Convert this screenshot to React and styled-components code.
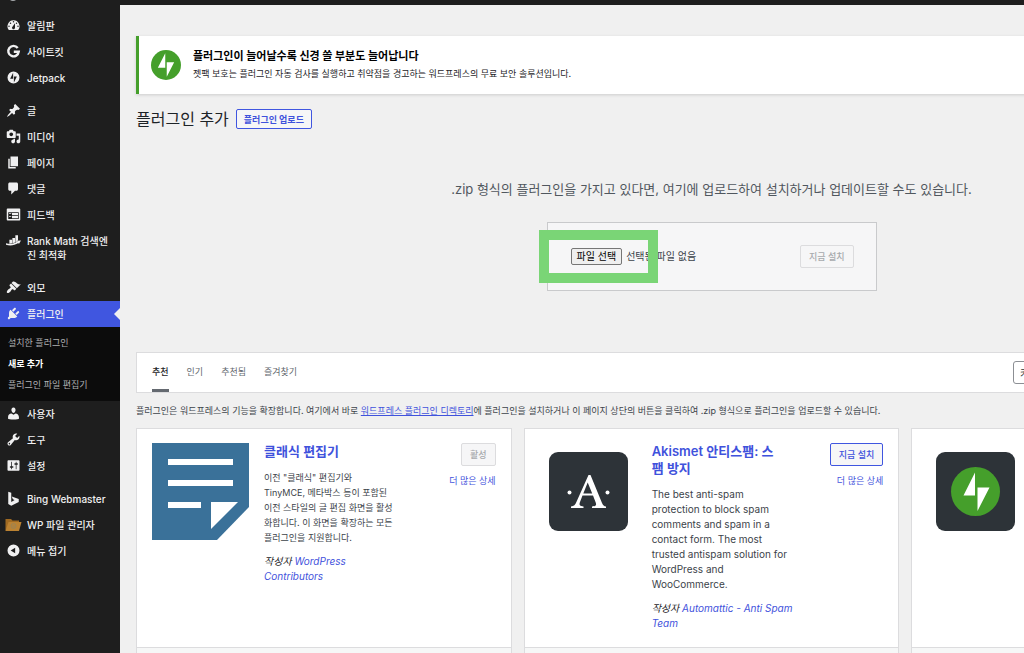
import React, { useState } from "react";
import styled, { createGlobalStyle, css } from "styled-components";

const menu = [
	[
		{ icon: "dashboard", label: "알림판" },
		{ icon: "google", label: "사이트킷" },
		{ icon: "jetpack", label: "Jetpack" },
	],
	[
		{ icon: "pin", label: "글" },
		{ icon: "media", label: "미디어" },
		{ icon: "page", label: "페이지" },
		{ icon: "comments", label: "댓글" },
		{ icon: "feedback", label: "피드백" },
		{ icon: "rank", label: "Rank Math 검색엔\n진 최적화" },
	],
	[
		{ icon: "appearance", label: "외모" },
		{
			icon: "plugins",
			label: "플러그인",
			current: true,
			children: ["설치한 플러그인", "새로 추가", "플러그인 파일 편집기"],
		},
		{ icon: "users", label: "사용자" },
		{ icon: "tools", label: "도구" },
		{ icon: "settings", label: "설정" },
	],
	[
		{ icon: "bing", label: "Bing Webmaster" },
		{ icon: "folder", label: "WP 파일 관리자" },
	],
];

const tabs = ["추천", "인기", "추천됨", "즐겨찾기"];

const plugins = [
	{
		id: "classic",
		name: "클래식 편집기",
		text: '이전 "클래식" 편집기와\nTinyMCE, 메타박스 등이 포함된\n이전 스타일의 글 편집 화면을 활성\n화합니다. 이 화면을 확장하는 모든\n플러그인을 지원합니다.',
		author: "WordPress\nContributors",
		active: true,
	},
	{
		id: "akismet",
		name: "Akismet 안티스팸: 스팸 방지",
		text: "The best anti-spam\nprotection to block spam\ncomments and spam in a\ncontact form. The most\ntrusted antispam solution for\nWordPress and\nWooCommerce.",
		author: "Automattic - Anti Spam\nTeam",
		latin: true,
	},
	{
		id: "jetpack",
		name: "Jetpack",
		text: "Security, performance, and marketing tools made by WordPress experts.",
		author: "Automattic",
		latin: true,
	},
];

const paths = {
	dashboard:
		"M3.76 16h12.48A7.998 7.998 0 0 0 10 3a7.998 7.998 0 0 0-6.24 13zM10 4c.55 0 1 .45 1 1s-.45 1-1 1-1-.45-1-1 .45-1 1-1zM6 6c.55 0 1 .45 1 1s-.45 1-1 1-1-.45-1-1 .45-1 1-1zm8 0c.55 0 1 .45 1 1s-.45 1-1 1-1-.45-1-1 .45-1 1-1zm-5.37 5.55L12 7v6c0 1.1-.9 2-2 2s-2-.9-2-2c0-.57.24-1.08.63-1.45zM4 10c.55 0 1 .45 1 1s-.45 1-1 1-1-.45-1-1 .45-1 1-1zm12 0c.55 0 1 .45 1 1s-.45 1-1 1-1-.45-1-1 .45-1 1-1z",
	pin: "M10.44 3.02l1.82-1.82 6.36 6.35-1.83 1.82c-1.05-.68-2.48-.57-3.41.36l-.75.75c-.92.93-1.04 2.35-.35 3.41l-1.83 1.82-2.41-2.41-2.8 2.79c-.42.42-3.38 2.71-3.8 2.29s1.86-3.39 2.28-3.81l2.79-2.79L4.1 9.36l1.83-1.82c1.05.69 2.48.57 3.4-.36l.75-.75c.93-.92 1.05-2.35.36-3.41z",
	media: "M13 11V4c0-.55-.45-1-1-1h-1.67L9 1H5L3.67 3H2c-.55 0-1 .45-1 1v7c0 .55.45 1 1 1h10c.55 0 1-.45 1-1zM7 4.5c1.38 0 2.5 1.12 2.5 2.5S8.38 9.5 7 9.5 4.5 8.38 4.5 7 5.62 4.5 7 4.5zM14 6h5v10.5c0 1.38-1.12 2.5-2.5 2.5S14 17.88 14 16.5s1.12-2.5 2.5-2.5c.17 0 .34.02.5.05V9h-3V6zm-4 8.05V13h2v3.5c0 1.38-1.12 2.5-2.5 2.5S7 17.88 7 16.5 8.12 14 9.5 14c.17 0 .34.02.5.05z",
	page: "M6 15V2h10v13H6zm-1 1h8v2H3V5h2v11z",
	comments:
		"M5 2h9c1.1 0 2 .9 2 2v7c0 1.1-.9 2-2 2h-2l-5 5v-5H5c-1.1 0-2-.9-2-2V4c0-1.1.9-2 2-2z",
	feedback:
		"M2 2h16c.55 0 1 .45 1 1v14c0 .55-.45 1-1 1H2c-.55 0-1-.45-1-1V3c0-.55.45-1 1-1zm15 14V7H3v9h14zM4 8v1h3V8H4zm4 0v3h8V8H8zm-4 4v1h3v-1H4zm4 0v3h8v-3H8z",
	appearance:
		"M14.48 11.06L7.41 3.99l1.5-1.5c.5-.56 2.3-.47 3.51.32 1.21.8 1.43 1.28 2.91 2.1 1.18.64 2.45 1.26 4.45.85zm-.71.71L6.7 4.7 4.93 6.47c-.39.39-.39 1.02 0 1.41l1.06 1.06c.39.39.39 1.03 0 1.42-.6.6-1.43 1.11-2.21 1.69-.35.26-.7.53-1.01.84C1.43 14.23.4 16.08 1.4 17.07c.99 1 2.84-.03 4.18-1.36.31-.31.58-.66.85-1.02.57-.78 1.08-1.61 1.69-2.21.39-.39 1.02-.39 1.41 0l1.06 1.06c.39.39 1.02.39 1.41 0z",
	plugins:
		"M13.11 4.36L9.87 7.6 8 5.73l3.24-3.24c.35-.34 1.05-.2 1.56.32.52.51.66 1.21.31 1.55zm-8 1.77l.91-1.12 9.01 9.01-1.19.84c-.71.71-2.63 1.16-3.82 1.16H6.14L4.9 17.26c-.59.59-1.54.59-2.12 0-.59-.58-.59-1.53 0-2.12l1.24-1.24v-3.88c0-1.13.4-3.19 1.09-3.89zm7.26 3.97l3.24-3.24c.34-.35 1.04-.21 1.55.31.52.51.66 1.21.31 1.55l-3.24 3.25z",
	users: "M10 9.25c-2.27 0-2.73-3.44-2.73-3.44C7 4.02 7.82 2 9.97 2c2.16 0 2.98 2.02 2.71 3.81 0 0-.41 3.44-2.68 3.44zm0 2.57L12.72 10c2.39 0 4.52 2.33 4.52 4.53v2.49s-3.65 1.13-7.24 1.13c-3.65 0-7.24-1.13-7.24-1.13v-2.49c0-2.25 1.94-4.48 4.47-4.48z",
	tools: "M16.68 9.77c-1.34 1.34-3.3 1.67-4.95.99l-5.41 6.52c-.99.99-2.59.99-3.58 0s-.99-2.59 0-3.57l6.52-5.42c-.68-1.65-.35-3.61.99-4.95 1.28-1.28 3.12-1.62 4.72-1.06l-2.89 2.89 2.82 2.82 2.86-2.87c.53 1.58.18 3.39-1.08 4.65zM3.81 16.21c.4.39 1.04.39 1.43 0 .4-.4.4-1.04 0-1.43-.39-.4-1.03-.4-1.43 0-.39.39-.39 1.03 0 1.43z",
	settings:
		"M18 16V4c0-.55-.45-1-1-1H3c-.55 0-1 .45-1 1v12c0 .55.45 1 1 1h14c.55 0 1-.45 1-1zM8 11h1c.55 0 1 .45 1 1s-.45 1-1 1H8v1.5c0 .28-.22.5-.5.5s-.5-.22-.5-.5V13H6c-.55 0-1-.45-1-1s.45-1 1-1h1V5.5c0-.28.22-.5.5-.5s.5.22.5.5V11zm5-2h-1c-.55 0-1-.45-1-1s.45-1 1-1h1V5.5c0-.28.22-.5.5-.5s.5.22.5.5V7h1c.55 0 1 .45 1 1s-.45 1-1 1h-1v5.5c0 .28-.22.5-.5.5s-.5-.22-.5-.5V9z",
	rank: "M4.500 9H8v4.500l-3.500.5zM8.500 6.500H12v6l-3.500 1zM12.500 3H16v7.500l-3.500 1.800zM0 13.500c6 1.800 11 .5 15-2.300l-.6-1 5.600-.2-2.800 4.500-.7-1.200C11.500 16.500 5 17.500 0 15.500z",
	bing: "M3 1l4 1.400v12.200l4.500-2.600-2.300-1.100-1.500-3.600 9.300 3.300v4.200L7 19.500l-4-2.300z",
	collapse: "M10 2a8 8 0 1 0 0 16 8 8 0 0 0 0-16zm2.200 4.200v7.600L6.200 10z",
};

const Icon = ({ name }) => {
	if (name === "google") {
		return (
			<IconSvg viewBox="0 0 20 20">
				<path
					d="M15.600 5.200A7 7 0 1 0 17 10.300h-6.600"
					fill="none"
					stroke="currentColor"
					strokeWidth="3.200"
				/>
			</IconSvg>
		);
	}
	if (name === "jetpack") {
		return (
			<IconSvg viewBox="-4 -4 40 40">
				<path d="M16 0a16 16 0 1 0 0 32 16 16 0 0 0 0-32zM15 19H7l8-16zM17 29V13h8z" />
			</IconSvg>
		);
	}
	if (name === "folder") {
		return (
			<FolderSvg viewBox="0 0 34 28">
				<path d="M1 3h11l3 3h13v20H1z" fill="#a06a22" />
				<path d="M7 9h26l-5 18H1z" fill="#bb8232" />
				<circle cx="17" cy="17" r="5" fill="none" stroke="#9c8254" strokeWidth="2" />
				<path d="M14 15l2 5 1-4 1 4 2-5" fill="none" stroke="#9c8254" />
			</FolderSvg>
		);
	}
	return (
		<IconSvg viewBox="0 0 20 20">
			<path d={paths[name]} fillRule="evenodd" />
		</IconSvg>
	);
};

const JetpackLogo = ({ size }) => (
	<svg width={size} height={size} viewBox="0 0 32 32" aria-hidden="true">
		<circle cx="16" cy="16" r="16" fill="#459f2b" />
		<path d="M15.200 19H7.300l7.900-15.500zM16.800 28.500V13h7.900z" fill="#fff" />
	</svg>
);

const PluginIcon = ({ id }) => {
	if (id === "classic") {
		return (
			<PluginSvg viewBox="0 0 97 97">
				<path d="M0 0h97v64L65 97H0z" fill="#3a7199" />
				<path
					d="M16 16h65v6H16zM16 37h65v6H16zM16 59h33v6H16zM59 59h27L59 86z"
					fill="#fff"
				/>
			</PluginSvg>
		);
	}
	return (
		<PluginSvg viewBox="0 0 97 97">
			<rect x="9" y="9" width="79" height="79" rx="9" fill="#2d3338" />
			{id === "akismet" ? (
				<g fill="#fff">
					<circle cx="29.500" cy="49.500" r="2" />
					<circle cx="67.500" cy="49.500" r="2" />
					<path
						d="M48.500 32h2l11.500 28c1 2.500 2 3.300 4 3.500V65H52v-1.500c4-.3 4.700-1.300 3.700-4L53 52.500H42.500L40 59c-1.200 3 0 4.200 3.500 4.500V65H31v-1.500c3-.4 4.300-1.700 5.500-4.800zM47.700 39.500L43.300 50.500h8.900z"
						fillRule="evenodd"
					/>
				</g>
			) : (
				<g>
					<circle cx="48.500" cy="48.500" r="24.500" fill="#459f2b" />
					<path d="M48 52.500H36.500L48 29.500zM50.500 68V44.500h12z" fill="#fff" />
				</g>
			)}
		</PluginSvg>
	);
};

const App = () => {
	const [tab, setTab] = useState("추천");
	const [fileName, setFileName] = useState("선택된 파일 없음");

	function handleFile(e) {
		const file = e.target.files[0];
		setFileName(file ? file.name : "선택된 파일 없음");
	}

	return (
		<Page>
			<GlobalStyle />
			<AdminBar>
				<svg width="10" height="10" viewBox="0 0 10 10" aria-hidden="true">
					<circle cx="5" cy="5" r="4" fill="none" stroke="#a7aaad" strokeWidth="2" />
				</svg>
			</AdminBar>
			<Layout>
				<Sidebar>
					{menu.map((group, i) => (
						<MenuGroup key={i}>
							{group.map((item) => (
								<li key={item.icon}>
									<MenuLink href="#" $current={item.current}>
										<Icon name={item.icon} />
										<span>{item.label}</span>
									</MenuLink>
									{item.children && (
										<Submenu>
											{item.children.map((child) => (
												<li key={child}>
													<SubLink href="#" $current={child === "새로 추가"}>
														{child}
													</SubLink>
												</li>
											))}
										</Submenu>
									)}
								</li>
							))}
							{i === menu.length - 1 && (
								<li>
									<CollapseButton type="button">
										<Icon name="collapse" />
										<span>메뉴 접기</span>
									</CollapseButton>
								</li>
							)}
						</MenuGroup>
					))}
				</Sidebar>

				<Main>
					<Content>
						<Notice>
							<JetpackLogo size={30} />
							<div>
								<NoticeTitle>플러그인이 늘어날수록 신경 쓸 부분도 늘어납니다</NoticeTitle>
								<NoticeText>
									젯팩 보호는 플러그인 자동 검사를 실행하고 취약점을 경고하는
									워드프레스의 무료 보안 솔루션입니다.
								</NoticeText>
							</div>
						</Notice>

						<Heading>
							<h1>플러그인 추가</h1>
							<UploadToggle type="button">플러그인 업로드</UploadToggle>
						</Heading>

						<Upload>
							<p>
								.zip 형식의 플러그인을 가지고 있다면, 여기에 업로드하여 설치하거나
								업데이트할 수도 있습니다.
							</p>
							<UploadForm onSubmit={(e) => e.preventDefault()}>
								<FilePicker>
									<FileInput id="pluginzip" type="file" accept=".zip" onChange={handleFile} />
									<FileLabel htmlFor="pluginzip">파일 선택</FileLabel>
									<span>{fileName}</span>
								</FilePicker>
								<Button type="submit" disabled>
									지금 설치
								</Button>
								<Highlight />
							</UploadForm>
						</Upload>

						<FilterBar>
							<Tabs>
								{tabs.map((item) => (
									<Tab
										key={item}
										type="button"
										$active={item === tab}
										onClick={() => setTab(item)}
									>
										{item}
									</Tab>
								))}
							</Tabs>
							<Search>
								<select aria-label="검색 기준" defaultValue="키워드">
									<option>키워드</option>
									<option>작성자</option>
									<option>태그</option>
								</select>
								<input type="search" aria-label="플러그인 검색" placeholder="플러그인 검색..." />
							</Search>
						</FilterBar>

						<Intro>
							플러그인은 워드프레스의 기능을 확장합니다. 여기에서 바로{" "}
							<a href="#">워드프레스 플러그인 디렉토리</a>에 플러그인을 설치하거나 이 페이지
							상단의 버튼을 클릭하여 .zip 형식으로 플러그인을 업로드할 수 있습니다.
						</Intro>

						<Cards>
							{plugins.map((plugin) => (
								<Card key={plugin.id}>
									<CardBody>
										<PluginIcon id={plugin.id} />
										<CardText $latin={plugin.latin}>
											<h3>
												<a href="#">{plugin.name}</a>
											</h3>
											<p>{plugin.text}</p>
											<Author>
												작성자 <a href="#">{plugin.author}</a>
											</Author>
										</CardText>
										<Actions>
											<Button type="button" disabled={plugin.active}>
												{plugin.active ? "활성" : "지금 설치"}
											</Button>
											<a href="#">더 많은 상세</a>
										</Actions>
									</CardBody>
									<CardFooter />
								</Card>
							))}
						</Cards>
					</Content>
				</Main>
			</Layout>
		</Page>
	);
};

export default App;

const GlobalStyle = createGlobalStyle`
	* {
		box-sizing: border-box;
	}

	body {
		margin: 0;
		overflow: hidden;
		background-color: #f0f0f0;
		color: #3c434a;
		font-family: Inter, "Noto Sans CJK KR", sans-serif;
		font-size: 9px;
		line-height: 15px;
	}

	h1, h2, h3, p, ul {
		margin: 0;
		padding: 0;
	}

	ul {
		list-style: none;
	}

	a {
		color: #3f52dc;
	}

	button, input, select {
		font-family: inherit;
	}
`;

const Page = styled.div`
	height: 100vh;
	display: flex;
	flex-direction: column;
	overflow: hidden;
`;

const AdminBar = styled.header`
	flex: none;
	height: 5px;
	padding-left: 8px;
	background-color: #1e1e1e;
	display: flex;
	align-items: flex-end;
	overflow: hidden;

	svg {
		flex: none;
		margin-bottom: 4px;
	}
`;

const Layout = styled.div`
	flex: 1;
	min-height: 0;
	display: grid;
	grid-template-columns: 120px minmax(0, 1fr);
`;

const Sidebar = styled.nav`
	padding-top: 8px;
	background-color: #1e1e1e;
`;

const MenuGroup = styled.ul`
	margin-bottom: 7px;
`;

const menuRow = css`
	position: relative;
	width: 100%;
	padding: 5px 6px;
	display: flex;
	align-items: flex-start;
	gap: 6px;
	color: #f0f0f1;
	font-size: 10px;
	font-weight: 500;
	line-height: 14px;
	text-align: left;
	text-decoration: none;

	span {
		padding: 1px 0;
		white-space: pre;
	}
`;

const MenuLink = styled.a`
	${menuRow}
	background-color: ${({ $current }) => ($current ? "#4056e0" : "transparent")};

	&::after {
		content: ${({ $current }) => ($current ? '""' : "none")};
		position: absolute;
		top: 7px;
		right: 0;
		border: 6px solid transparent;
		border-left: 0;
		border-right-color: #f0f0f0;
	}
`;

const CollapseButton = styled.button`
	${menuRow}
	border: 0;
	background: none;
	cursor: pointer;
`;

const IconSvg = styled.svg`
	flex: none;
	width: 15px;
	height: 15px;
	fill: currentColor;
`;

const FolderSvg = styled.svg`
	flex: none;
	width: 17px;
	height: 15px;
	margin: 0 -1px;
`;

const Submenu = styled.ul`
	padding: 5px 0 6px;
	background-color: #0c0c0c;
`;

const SubLink = styled.a`
	display: block;
	padding: 3px 8px;
	color: ${({ $current }) => ($current ? "#fff" : "#b0b1b3")};
	font-weight: ${({ $current }) => ($current ? 700 : 400)};
	text-decoration: none;
`;

const Main = styled.main`
	padding: 31px 0 0 16px;
	overflow: hidden;
`;

const Content = styled.div`
	min-width: 1151px;
`;

const Notice = styled.section`
	padding: 12px;
	border-left: 3px solid #459f2b;
	background-color: #fff;
	box-shadow: 0 1px 3px rgba(0, 0, 0, 0.15);
	display: flex;
	align-items: center;
	gap: 12px;
`;

const NoticeTitle = styled.h2`
	color: #000;
	font-size: 11px;
	font-weight: 700;
	line-height: 17px;
`;

const NoticeText = styled.p`
	color: #1d2327;
	line-height: 17px;
`;

const Heading = styled.div`
	margin-top: 15px;
	display: flex;
	align-items: center;
	gap: 7px;

	h1 {
		color: #1d2327;
		font-size: 16px;
		font-weight: 400;
		line-height: 20px;
	}
`;

const UploadToggle = styled.button`
	height: 20px;
	padding: 0 7px;
	border: 1px solid #4056e0;
	border-radius: 2px;
	background-color: #f6f6f7;
	color: #3f52dc;
	font-size: 9px;
	font-weight: 700;
	cursor: pointer;
`;

const Upload = styled.section`
	margin: 50px 0 61px;
	text-align: center;

	p {
		color: #50575e;
		font-size: 13px;
		line-height: 20px;
	}
`;

const UploadForm = styled.form`
	position: relative;
	width: 330px;
	height: 69px;
	margin: 23px auto 0;
	padding: 0 22px 0 23px;
	border: 1px solid #c9cacc;
	background-color: #f6f6f7;
	display: flex;
	align-items: center;
	justify-content: space-between;
`;

const FilePicker = styled.div`
	display: flex;
	align-items: center;
	gap: 4px;
	font-size: 10px;
`;

const FileInput = styled.input`
	position: absolute;
	width: 1px;
	height: 1px;
	opacity: 0;
`;

const FileLabel = styled.label`
	padding: 0 5px;
	border: 1px solid #767676;
	border-radius: 2px;
	background-color: #efefef;
	color: #000;
	cursor: pointer;
`;

const Highlight = styled.div`
	position: absolute;
	top: 7px;
	left: -9px;
	width: 119px;
	height: 53px;
	border: 10px solid #7ad576;
	pointer-events: none;
`;

const Button = styled.button`
	height: 23px;
	padding: 0 8px;
	border: 1px solid #4056e0;
	border-radius: 2px;
	background-color: #f6f6f7;
	color: #3f52dc;
	font-size: 9px;
	font-weight: 500;
	cursor: pointer;

	&:disabled {
		border-color: #dcdcde;
		color: #a7aaad;
		cursor: default;
	}
`;

const FilterBar = styled.div`
	height: 41px;
	padding: 0 15px;
	border: 1px solid #dcdcde;
	background-color: #fff;
	display: flex;
	align-items: center;
	justify-content: space-between;
`;

const Tabs = styled.div`
	height: 100%;
	display: flex;
	gap: 18px;
`;

const Tab = styled.button`
	padding: 0;
	border: 0;
	border-bottom: 3px solid ${({ $active }) => ($active ? "#646970" : "transparent")};
	background: none;
	color: ${({ $active }) => ($active ? "#1d2327" : "#646970")};
	font-size: 9px;
	font-weight: ${({ $active }) => ($active ? 500 : 400)};
	cursor: pointer;
`;

const Search = styled.div`
	display: flex;
	gap: 4px;

	select,
	input {
		height: 23px;
		padding: 0 6px;
		border: 1px solid #8c8f94;
		border-radius: 3px;
		background-color: #fff;
		color: #2c3338;
		font-size: 10px;
	}

	select {
		width: 70px;
		appearance: none;
	}

	input {
		width: 184px;
	}
`;

const Intro = styled.p`
	margin: 10px 0;
`;

const Cards = styled.div`
	display: grid;
	grid-template-columns: repeat(3, 1fr);
	gap: 12px;
`;

const Card = styled.article`
	border: 1px solid #dcdcde;
	background-color: #fff;
`;

const CardBody = styled.div`
	min-height: 218px;
	padding: 14px 15px;
	display: flex;
	align-items: flex-start;
`;

const PluginSvg = styled.svg`
	flex: none;
	width: 97px;
	height: 97px;
`;

const CardText = styled.div`
	width: 144px;
	margin-left: 15px;

	h3 {
		margin-bottom: 10px;
		padding-right: 16px;
		font-size: 13px;
		font-weight: 600;
		line-height: 17px;
	}

	a {
		text-decoration: none;
	}

	p {
		font-size: ${({ $latin }) => ($latin ? "10px" : "9px")};
		white-space: pre-line;
	}
`;

const Author = styled.address`
	margin-top: 9px;
	color: #1d2327;
	font-size: 10px;
	font-style: italic;
	white-space: pre-line;
`;

const Actions = styled.div`
	margin-left: auto;
	display: flex;
	flex-direction: column;
	align-items: flex-end;
	gap: 7px;

	a {
		text-decoration: none;
	}
`;

const CardFooter = styled.footer`
	height: 60px;
	border-top: 1px solid #dcdcde;
	background-color: #f6f7f7;
`;
